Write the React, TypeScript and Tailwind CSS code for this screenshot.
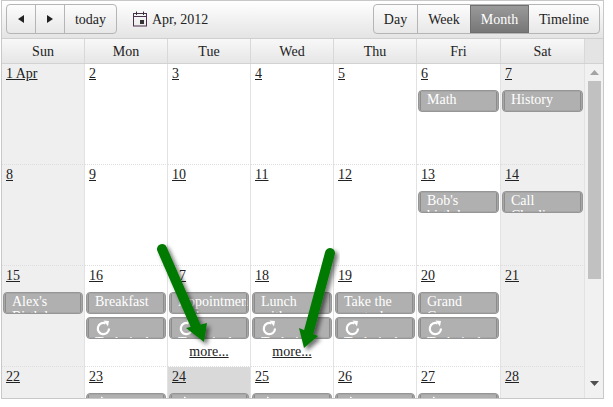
import React from "react";

type Ev = { t: string; icon?: "r" | "p" };
type Cell = { d: string; ev?: Ev[]; more?: boolean; we?: boolean; today?: boolean };

const R: Ev = { t: "Technical", icon: "r" };
const P: Ev = { t: "Meeting", icon: "p" };

const rows: Cell[][] = [
  [{ d: "1 Apr", we: true }, { d: "2" }, { d: "3" }, { d: "4" }, { d: "5" }, { d: "6", ev: [{ t: "Math" }] }, { d: "7", we: true, ev: [{ t: "History" }] }],
  [{ d: "8", we: true }, { d: "9" }, { d: "10" }, { d: "11" }, { d: "12" }, { d: "13", ev: [{ t: "Bob's birthday" }] }, { d: "14", we: true, ev: [{ t: "Call Charlie" }] }],
  [
    { d: "15", we: true, ev: [{ t: "Alex's Birthday" }] },
    { d: "16", ev: [{ t: "Breakfast" }, R] },
    { d: "17", ev: [{ t: "Appointment with" }, R], more: true },
    { d: "18", ev: [{ t: "Lunch with" }, R], more: true },
    { d: "19", ev: [{ t: "Take the controls" }, R] },
    { d: "20", ev: [{ t: "Grand Canyon" }, R] },
    { d: "21", we: true },
  ],
  [
    { d: "22", we: true },
    { d: "23", ev: [P] },
    { d: "24", today: true, ev: [P] },
    { d: "25", ev: [P] },
    { d: "26", ev: [P] },
    { d: "27", ev: [P] },
    { d: "28", we: true },
  ],
];

const cols = "grid grid-cols-[83px_83px_83px_83px_83px_84px_84px]";
const days = ["Sun", "Mon", "Tue", "Wed", "Thu", "Fri", "Sat"];

function Event({ e }: { e: Ev }) {
  return (
    <div className="relative mb-[3px] ml-[1px] mr-[1px] h-[22px] overflow-hidden rounded-[4px] border border-[#969696] bg-[#b0b0b0] px-[2px] text-white shadow-[inset_0_0_0_1px_#a6a6a6]">
      <div className="absolute left-[1px] top-[1px] bottom-[1px] w-px bg-[#8c8c8c]" />
      <div className="absolute right-[1px] top-[1px] bottom-[1px] w-px bg-[#8c8c8c]" />
      <div className="pl-[6px] pr-[7px] pt-[1px] text-[14px] leading-[15px]">
        {e.icon === "r" && (
          <svg viewBox="0 0 16 16" className="mt-[1px] block h-[16px] w-[16px]" fill="none" stroke="#fff" strokeWidth="2.2">
            <path d="M10.5 3.4A5.6 5.6 0 1 0 14 8.5" />
            <path d="M8.5 0.5 L14 1 L13 6.5 Z" fill="#fff" stroke="none" />
          </svg>
        )}
        {e.icon === "p" && (
          <svg viewBox="0 0 16 16" className="mt-[1px] block h-[16px] w-[16px]" fill="#fff">
            <path d="M6 0.5L12 4V8H6Z" />
          </svg>
        )}
        <div className={e.icon ? "mt-[-1px]" : ""}>{e.t}</div>
      </div>
    </div>
  );
}

function DayCell({ c }: { c: Cell }) {
  const bg = c.today ? "bg-[#d9d9d9]" : c.we ? "bg-[#efefef]" : "bg-white";
  return (
    <div className={`h-[101px] overflow-hidden border-r border-b border-r-[#e2e2e2] border-b-[#dddddd] [border-bottom-style:dotted] ${bg}`}>
      <div className="h-[26px] pl-[4px] pt-[1px] text-[14px] leading-[18px]">
        <span className="underline">{c.d}</span>
      </div>
      {c.ev?.map((e, i) => <Event key={i} e={e} />)}
      {c.more && <div className="mt-[5px] text-center text-[14px] leading-[16px] underline">more...</div>}
    </div>
  );
}

function Arrow({ x, y, path, head }: { x: string; y: string; path: string; head: string }) {
  return (
    <svg className={`absolute ${x} ${y}`} width="80" height="115" viewBox="0 0 80 115">
      <defs>
        <filter id="s" x="-30%" y="-30%" width="160%" height="160%">
          <feDropShadow dx="3" dy="3" stdDeviation="2" floodColor="#000" floodOpacity="0.55" />
        </filter>
      </defs>
      <g filter="url(#s)">
        <path d={path} stroke="#067a06" strokeWidth="10" strokeLinecap="round" fill="none" />
        <path d={head} fill="#067a06" />
      </g>
    </svg>
  );
}

export default function App() {
  return (
    <div className="relative ml-[1px] h-[399px] w-[603px] overflow-hidden border border-[#c8c8c8] bg-white font-['Liberation_Serif',serif] text-[14px] text-[#222]">
      <div className="flex h-[38px] items-start justify-between border-b border-[#cfcfcf] bg-gradient-to-b from-white to-[#e4e4e4] pl-[4px] pr-[3px] pt-[3px]">
        <div className="flex h-[30px] items-center">
          <div className="flex h-[30px] items-stretch rounded-[4px] border border-[#b5b5b5]">
            <div className="flex w-[29px] items-center justify-center border-r border-[#b5b5b5]">
              <svg width="6" height="8" viewBox="0 0 6 8"><path d="M6 0V8L0 4Z" fill="#222" /></svg>
            </div>
            <div className="flex w-[29px] items-center justify-center border-r border-[#b5b5b5]">
              <svg width="6" height="8" viewBox="0 0 6 8"><path d="M0 0V8L6 4Z" fill="#222" /></svg>
            </div>
            <div className="flex w-[51px] items-center justify-center">today</div>
          </div>
          <svg className="ml-[15px]" width="16" height="16" viewBox="0 0 16 16" fill="none">
            <rect x="1.5" y="2.5" width="13" height="12.5" stroke="#4a2f4a" />
            <path d="M1.5 5.5H14.5" stroke="#4a2f4a" />
            <path d="M4.5 0.5V4M11.5 0.5V4" stroke="#333" />
            <rect x="8" y="9" width="4" height="4" fill="#333" />
          </svg>
          <span className="ml-[4px]">Apr, 2012</span>
        </div>
        <div className="flex h-[30px] items-stretch rounded-[4px] border border-[#b5b5b5]">
          <div className="flex w-[44px] items-center justify-center border-r border-[#b5b5b5]">Day</div>
          <div className="flex w-[52px] items-center justify-center">Week</div>
          <div className="flex w-[59px] items-center justify-center border border-[#6f6f6f] bg-gradient-to-b from-[#9a9a9a] to-[#777] text-white">Month</div>
          <div className="flex w-[70px] items-center justify-center">Timeline</div>
        </div>
      </div>
      <div className="flex h-[25px] border-b border-[#d2d2d2]">
        <div className={`${cols} bg-gradient-to-b from-[#f8f8f8] to-[#e6e6e6]`}>
          {days.map((d) => (
            <div key={d} className="flex items-center justify-center border-r border-[#d8d8d8]">{d}</div>
          ))}
        </div>
        <div className="flex-1 bg-[#e4e4e4]" />
      </div>
      <div className="flex h-[334px] overflow-hidden">
        <div>
          {rows.map((r, i) => (
            <div key={i} className={cols}>
              {r.map((c) => <DayCell key={c.d} c={c} />)}
            </div>
          ))}
        </div>
        <div className="flex h-[334px] w-[18px] flex-col items-center bg-[#f1f1f1] pt-[6px]">
          <svg width="9" height="5" viewBox="0 0 9 5"><path d="M0 5L4.5 0L9 5Z" fill="#a3a3a3" /></svg>
          <div className="mt-[6px] h-[198px] w-[13px] bg-[#c1c1c1]" />
          <svg className="mt-[102px]" width="9" height="5" viewBox="0 0 9 5"><path d="M0 0L4.5 5L9 0Z" fill="#505050" /></svg>
        </div>
      </div>
      <Arrow x="left-[149px]" y="top-[239px]" path="M11 9 L46 89" head="M35 88 L56 83 L53 102 Z" />
      <Arrow x="left-[262px]" y="top-[244px]" path="M66 8 L45 86" head="M35 83 L54 91 L40 103 Z" />
    </div>
  );
}
